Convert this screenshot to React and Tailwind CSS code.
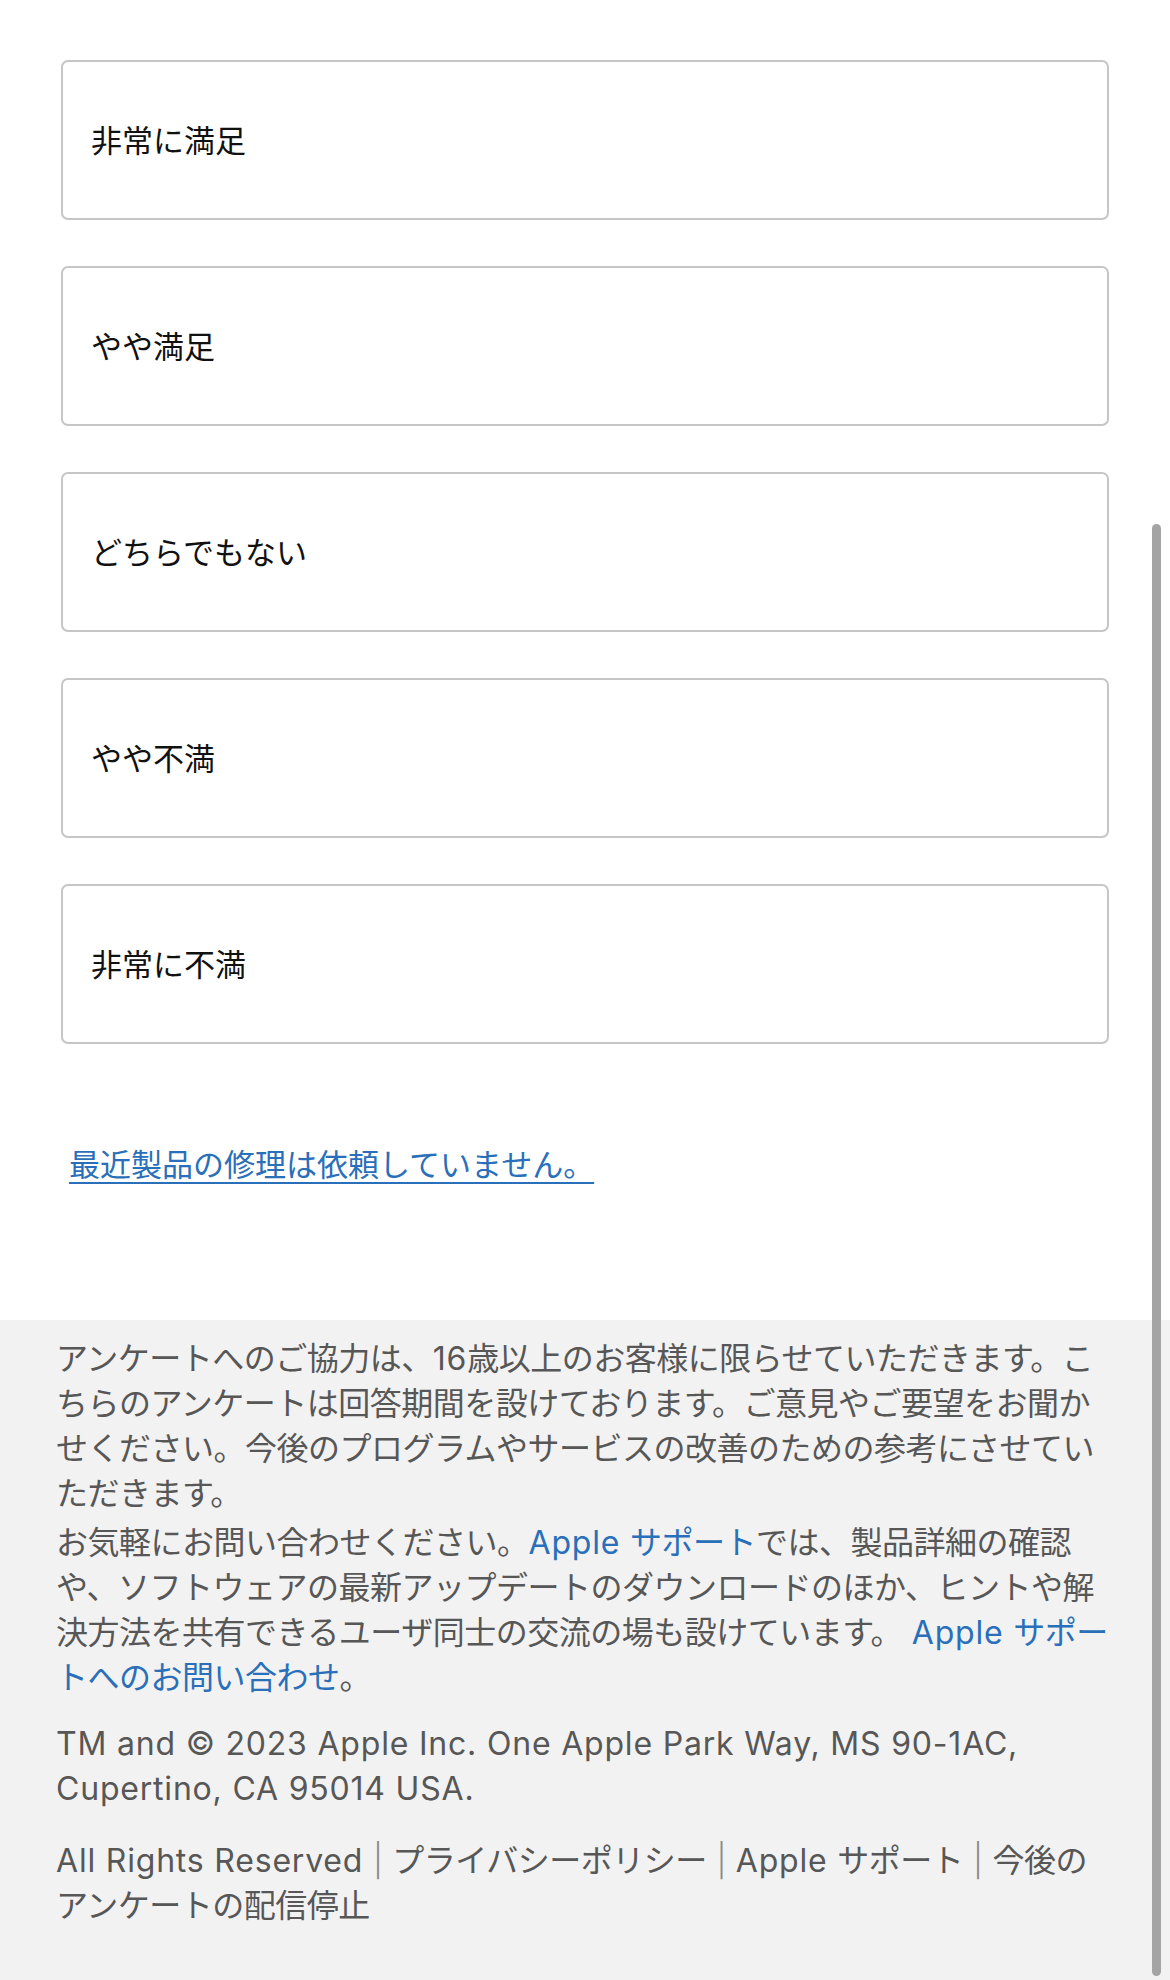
import React from "react";

const options = ["非常に満足", "やや満足", "どちらでもない", "やや不満", "非常に不満"];

const Blue = ({ children }) => <span className="text-[#2a6fb9]">{children}</span>;
const L = ({ children }) => <span className="tracking-[0.8px]">{children}</span>;

export default function App() {
  return (
    <div
      className="relative w-[1170px] h-[1980px] flex flex-col bg-white overflow-hidden"
      style={{ fontFamily: '"Inter", "Noto Sans CJK JP", sans-serif' }}
    >
      <div className="flex flex-col gap-[46px] pt-[60px] px-[61px]">
        {options.map((o) => (
          <div
            key={o}
            className="h-[160px] flex items-center pl-[28px] border-2 border-[#c6c6c6] rounded-[7px] text-[31px] text-[#111] leading-none"
          >
            {o}
          </div>
        ))}
      </div>

      <div className="pl-[69px] mt-[101px]">
        <a className="text-[31px] leading-[40px] text-[#2a6fb9] underline decoration-2 underline-offset-[6px]">
          最近製品の修理は依頼していません。
        </a>
      </div>

      <div className="mt-[135px] flex-1 bg-[#f2f2f2] px-[56px] pt-[16px] text-[32px] leading-[45px] tracking-[-0.5px] text-[#575757] whitespace-nowrap">
        <div>
          <div>
            アンケートへのご協力は、<L>16</L>歳以上のお客様に限らせていただきます。こ
          </div>
          <div>ちらのアンケートは回答期間を設けております。ご意見やご要望をお聞か</div>
          <div>せください。今後のプログラムやサービスの改善のための参考にさせてい</div>
          <div>ただきます。</div>
        </div>
        <div className="mt-[4px]">
          <div>
            お気軽にお問い合わせください。
            <Blue>
              <L>Apple </L>サポート
            </Blue>
            では、製品詳細の確認
          </div>
          <div>や、ソフトウェアの最新アップデートのダウンロードのほか、ヒントや解</div>
          <div>
            決方法を共有できるユーザ同士の交流の場も設けています。
            <Blue>
              <L> Apple </L>サポー
            </Blue>
          </div>
          <div>
            <Blue>トへのお問い合わせ</Blue>。
          </div>
        </div>
        <div className="mt-[21px]">
          <div>
            <L>TM and © 2023 Apple Inc. One Apple Park Way, MS 90-1AC,</L>
          </div>
          <div>
            <L>Cupertino, CA 95014 USA.</L>
          </div>
        </div>
        <div className="mt-[27px]">
          <div>
            <L>All Rights Reserved </L>
            <span className="text-[#8a8a8a] font-light">|</span>
            <L> </L>プライバシーポリシー<L> </L>
            <span className="text-[#8a8a8a] font-light">|</span>
            <L> Apple </L>サポート<L> </L>
            <span className="text-[#8a8a8a] font-light">|</span>
            <L> </L>今後の
          </div>
          <div>アンケートの配信停止</div>
        </div>
      </div>

      <div className="absolute left-[1152px] top-[524px] w-[9px] h-[1452px] rounded-full bg-[#a4a4a4]" />
    </div>
  );
}
